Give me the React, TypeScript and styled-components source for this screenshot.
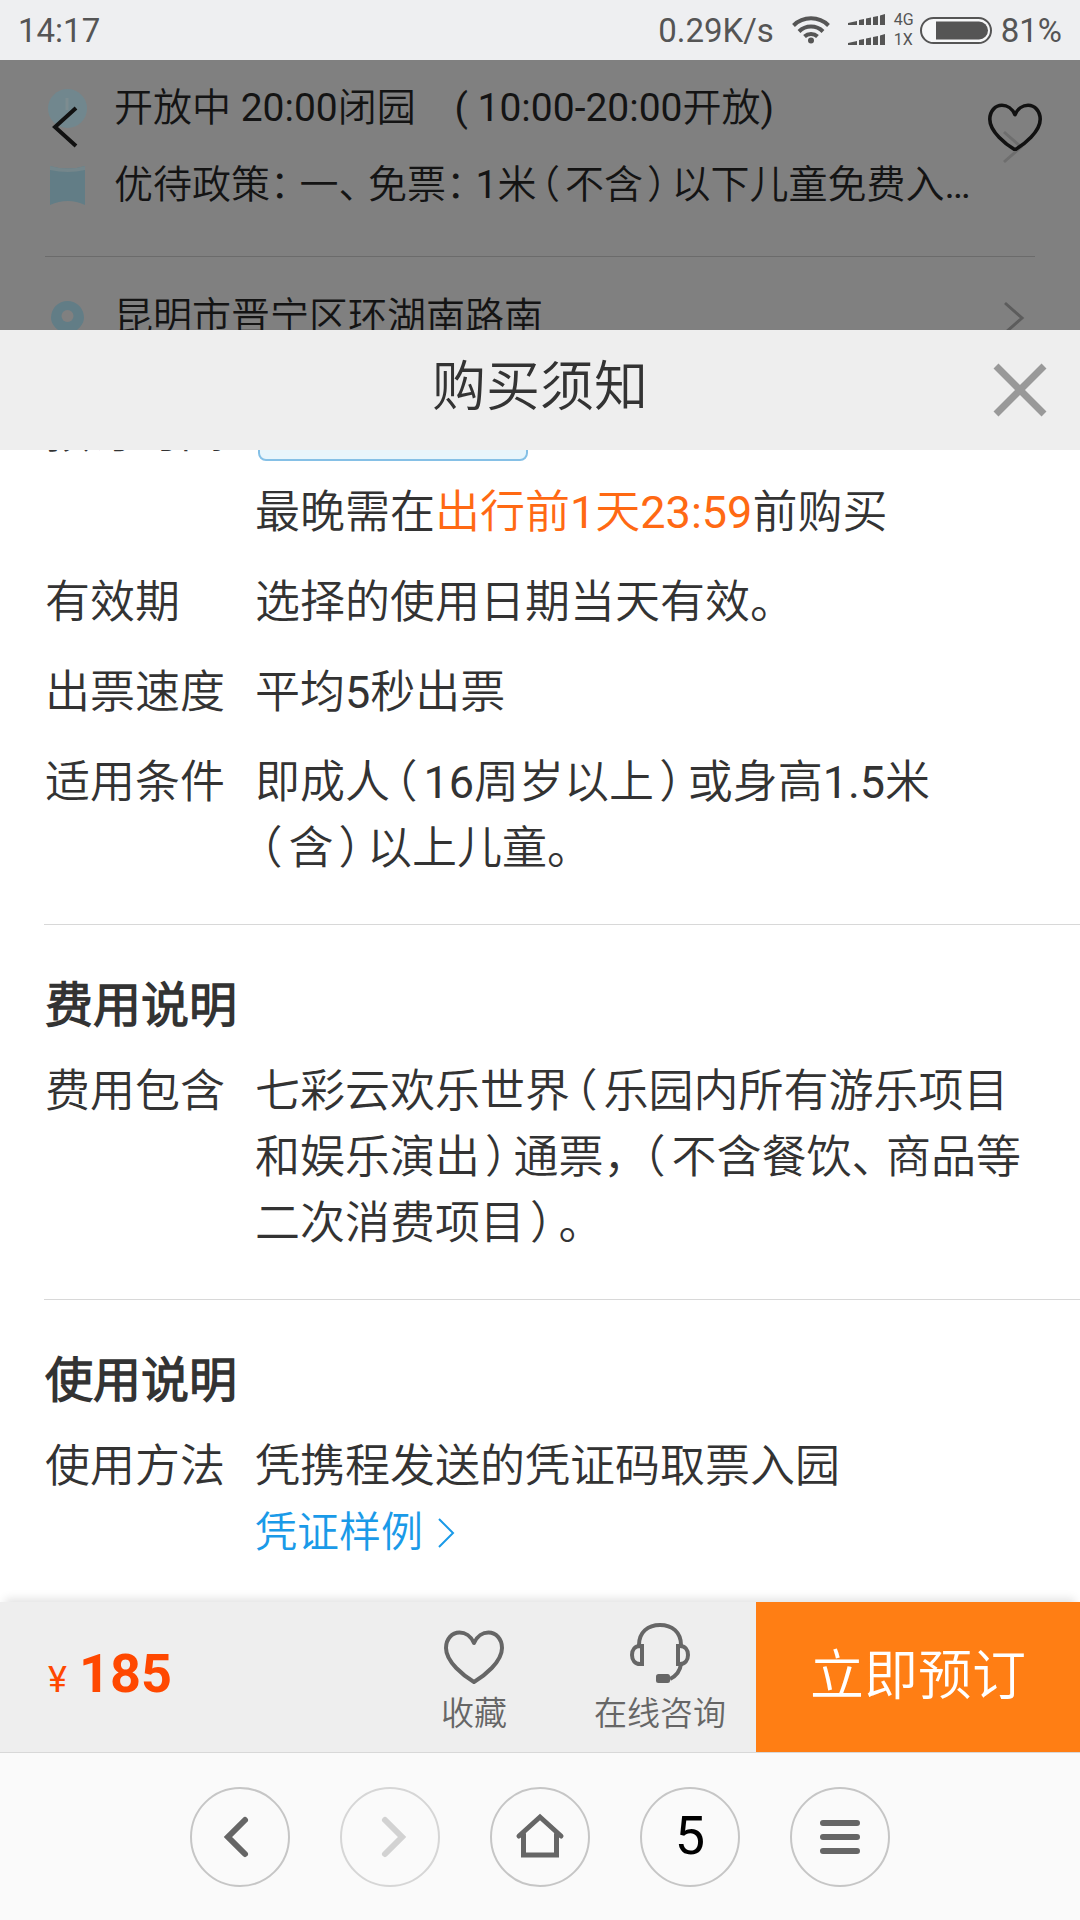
import React from 'react';
import styled, { createGlobalStyle } from 'styled-components';

const GlobalStyle = createGlobalStyle`
  *, *::before, *::after { box-sizing: border-box; }
  body {
    margin: 0;
    color: #333;
    background: #fff;
    font-family: Roboto, "Noto Sans CJK SC DemiLight", "Noto Sans CJK SC", sans-serif;
    font-weight: 400;
  }
  h1, h2, p, dl, dd, dt { margin: 0; font-weight: inherit; }
  button { border: 0; padding: 0; background: none; font: inherit; color: inherit; cursor: pointer; }
  svg { display: block; flex: none; }
`;

const Screen = styled.div`
  display: flex;
  flex-direction: column;
  height: 100vh;
  overflow: hidden;
`;

const StatusBar = styled.header`
  display: flex;
  align-items: center;
  justify-content: space-between;
  flex: none;
  height: 60px;
  padding: 0 18px;
  background: #eeeff1;
  color: #555;
  font-size: 33px;
`;

const StatusGroup = styled.div`
  display: flex;
  align-items: center;
`;

const Speed = styled.span`
  margin-right: 18px;
`;

const Signals = styled.div`
  display: flex;
  flex-direction: column;
  gap: 2px;
  margin: 0 6px 0 18px;
`;

const SignalRow = styled.div`
  display: flex;
  align-items: center;
  gap: 9px;
  font-size: 16px;
  line-height: 18px;
`;

const Level = styled.span`
  margin-left: 9px;
`;

const Backdrop = styled.section`
  position: relative;
  flex: none;
  height: 270px;
  overflow: hidden;
  padding: 10px 45px 0;
  background: #808080;
  color: #141414;
  font-size: 39px;
`;

const InfoRow = styled.div`
  display: flex;
  align-items: center;
  height: 77px;
  gap: 27px;
  padding: 0 10px 0 3px;
  white-space: pre;
`;

const InfoText = styled.p`
  flex: 1;
  padding-bottom: 10px;
`;

const Rule = styled.div`
  height: 1px;
  margin: 32px 0 22px;
  background: #6b6b6b;
`;

const FloatingButton = styled.button<{ $side: 'left' | 'right' }>`
  position: absolute;
  top: 39px;
  ${(p) => p.$side}: 35px;
  display: grid;
  place-items: center;
  width: 60px;
  height: 56px;
`;

const FaintChevron = styled.span`
  position: absolute;
  top: 70px;
  right: 56px;
`;

const SheetHeader = styled.div`
  display: grid;
  grid-template-columns: 1fr auto 1fr;
  align-items: center;
  flex: none;
  height: 120px;
  padding: 0 33px;
  background: #eee;
`;

const SheetTitle = styled.h1`
  grid-column: 2;
  padding-bottom: 4px;
  font-size: 54px;
  line-height: 72px;
`;

const CloseButton = styled.button`
  justify-self: end;
`;

const SheetBody = styled.main`
  display: flex;
  flex-direction: column;
  justify-content: flex-end;
  flex: 1;
  min-height: 0;
  overflow: hidden;
  padding: 0 0 36px 44px;
  font-size: 45px;
  line-height: 66px;
`;

const Section = styled.section`
  flex: none;
  padding-left: 1px;
  & + & {
    margin-top: 42px;
    padding-top: 48px;
    border-top: 1px solid #d8d8d8;
  }
`;

const SectionTitle = styled.h2`
  margin-bottom: 20px;
  font-size: 48px;
  font-weight: 700;
`;

const Terms = styled.dl`
  display: grid;
  row-gap: 24px;
`;

const Term = styled.div`
  display: grid;
  grid-template-columns: 210px 1fr;
  padding-right: 45px;
`;

const DateTag = styled.div`
  width: 270px;
  height: 61px;
  margin: 0 3px 19px;
  border: 2px solid #85c0e6;
  border-radius: 8px;
  background: #e8f5fb;
`;

const Accent = styled.span`
  color: #ff6913;
`;

const Punct = styled.span<{ $lead: number; $trail: number }>`
  padding: 0 ${(p) => p.$trail}px 0 ${(p) => p.$lead}px;
  font-feature-settings: "halt";
`;

const SampleLink = styled.a`
  display: flex;
  align-items: center;
  gap: 14px;
  color: #1a9ae8;
  font-size: 42px;
  text-decoration: none;
`;

const Footer = styled.footer`
  position: relative;
  display: flex;
  align-items: stretch;
  flex: none;
  height: 150px;
  background: #eee;
  box-shadow: 0 -8px 9px -5px rgba(0, 0, 0, 0.12);
`;

const Price = styled.p`
  flex: 1;
  align-self: center;
  padding: 0 0 8px 48px;
  color: #ff4800;
  font-size: 36px;
  strong { margin-left: 12px; font-size: 54px; font-weight: 700; }
`;

const Action = styled.button`
  display: flex;
  flex-direction: column;
  align-items: center;
  gap: 6px;
  width: 186px;
  padding-top: 20px;
  color: #666;
  font-size: 33px;
  line-height: 48px;
`;

const ActionIcon = styled.span`
  display: flex;
  align-items: flex-end;
  height: 62px;
`;

const BookButton = styled.button`
  width: 30%;
  margin-left: 3px;
  padding-bottom: 12px;
  background: #ff7e14;
  color: #fff;
  font-size: 54px;
`;

const BrowserBar = styled.nav`
  display: flex;
  align-items: center;
  justify-content: center;
  gap: 50px;
  flex: none;
  height: 168px;
  border-top: 1px solid #d8d8d8;
  background: #fafafa;
`;

const RoundButton = styled.button<{ $faded?: boolean }>`
  display: grid;
  place-items: center;
  width: 100px;
  height: 100px;
  border: 2px solid ${(p) => (p.$faded ? '#d6d6d6' : '#c6c6c6')};
  border-radius: 50%;
  color: ${(p) => (p.$faded ? '#d2d2d2' : '#666')};
`;

const TabCount = styled.span`
  padding-bottom: 2px;
  color: #000;
  font-size: 54px;
`;

const WifiIcon = () => (
  <svg width="38" height="28" viewBox="0 0 38 28" fill="none" stroke="#555" strokeWidth="4">
    <path d="M1.5 9.5 A25 25 0 0 1 36.500 9.500" />
    <path d="M7 15.500 A17 17 0 0 1 31 15.500" />
    <path d="M12.500 20.500 A9.500 9.500 0 0 1 25.500 20.500" />
    <circle cx="19" cy="24.500" r="3" fill="#555" stroke="none" />
  </svg>
);

const SignalIcon = () => (
  <svg width="37" height="12" viewBox="0 0 37 12" fill="#555">
    <path d="M0 11 V9 L9 7 V11 Z M11 6 L16 5 V11 H11 Z M18 4.500 L23 3.500 V11 H18 Z M25 3 L30 2 V11 H25 Z M32 1.500 L37 0 V11 H32 Z" />
  </svg>
);

const BatteryIcon = () => (
  <svg width="72" height="27" viewBox="0 0 72 27">
    <rect x="1" y="1" width="70" height="25" rx="12.500" fill="#f6f7f8" stroke="#555" strokeWidth="2" />
    <path d="M16 4.500 H59 A9 9 0 0 1 59 22.500 H16 Z" fill="#555" />
  </svg>
);

const ClockIcon = () => (
  <svg width="39" height="39" viewBox="0 0 39 39">
    <circle cx="19.500" cy="19.500" r="19.500" fill="#71878e" />
    <path d="M19 9 V21" stroke="#7d8c90" strokeWidth="3" />
  </svg>
);

const FlagIcon = () => (
  <svg width="39" height="39" viewBox="0 0 39 39">
    <path d="M2 0 Q20 5 37 0 V39 Q20 31 2 39 Z" fill="#627d86" />
    <path d="M2 0 Q20 5 37 0 V4 Q20 8 2 4 Z" fill="#74868b" />
  </svg>
);

const PinIcon = () => (
  <svg width="39" height="39" viewBox="0 0 39 39">
    <path d="M19.500 3 A16.500 16.500 0 0 1 36 19.500 C36 29 26 34 19.500 39 C13 34 3 29 3 19.500 A16.500 16.500 0 0 1 19.500 3 Z" fill="#627d86" />
    <circle cx="19.500" cy="18" r="6" fill="#808080" />
  </svg>
);

const ChevronRight = ({ color }: { color: string }) => (
  <svg width="22" height="34" viewBox="0 0 22 34" fill="none" stroke={color} strokeWidth="3">
    <path d="M2 2 L19 17 L2 32" />
  </svg>
);

const HeartIcon = ({ size, color }: { size: number; color: string }) => (
  <svg width={size} height={(size * 54) / 60} viewBox="0 0 60 54" fill="none" stroke={color} strokeWidth="4" strokeLinejoin="round">
    <path d="M30 13 C27 6 21 2.500 15.500 2.500 C8 2.500 2 9 2 18 C2 32 20 46 30 52 C40 46 58 32 58 18 C58 9 52 2.500 44.500 2.500 C39 2.500 33 6 30 13 Z" />
  </svg>
);

const HeadsetIcon = () => (
  <svg width="60" height="62" viewBox="0 0 60 62" fill="none" stroke="#666" strokeWidth="4">
    <path d="M9 23 C9 10 18 3 30 3 C42 3 51 10 51 23" />
    <path d="M12 24 V42 H10 C5 42 2 38 2 33 C2 28 5 24 10 24 Z" />
    <path d="M48 24 V42 H50 C55 42 58 38 58 33 C58 28 55 24 50 24 Z" />
    <path d="M51 42 C50 50 46 54 40 57" />
    <rect x="26" y="52" width="14" height="9" rx="2.500" fill="#666" stroke="none" />
  </svg>
);

const NavIcon = ({ d, weight = 6 }: { d: string; weight?: number }) => (
  <svg width="96" height="96" viewBox="2 2 96 96" fill="none" stroke="currentColor" strokeWidth={weight} strokeLinecap="round">
    <path d={d} />
  </svg>
);

const marks = /([（）：，、])/;

function Text({ children, small }: { children: string; small?: boolean }) {
  const side = small ? 5 : 6;
  return (
    <>
      {children.split(marks).map((part, i) => {
        if (!marks.test(part)) return part;
        const bracket = part === '（' || part === '）';
        return (
          <Punct key={i} $lead={bracket ? side - 1 : 0} $trail={bracket ? side : side * 2}>
            {part}
          </Punct>
        );
      })}
    </>
  );
}

export default function App() {
  return (
    <Screen>
      <GlobalStyle />
      <StatusBar>
        <span>14:17</span>
        <StatusGroup>
          <Speed>0.29K/s</Speed>
          <WifiIcon />
          <Signals>
            <SignalRow><SignalIcon />4G</SignalRow>
            <SignalRow><SignalIcon />1X</SignalRow>
          </Signals>
          <BatteryIcon />
          <Level>81%</Level>
        </StatusGroup>
      </StatusBar>

      <Backdrop>
        <InfoRow>
          <ClockIcon />
          <InfoText>{'开放中 20:00闭园    ( 10:00-20:00开放)'}</InfoText>
        </InfoRow>
        <InfoRow>
          <FlagIcon />
          <InfoText><Text small>优待政策：一、免票：1米（不含）以下儿童免费入…</Text></InfoText>
        </InfoRow>
        <Rule />
        <InfoRow>
          <PinIcon />
          <InfoText>昆明市晋宁区环湖南路南</InfoText>
          <ChevronRight color="#5c5c5c" />
        </InfoRow>
        <FaintChevron><ChevronRight color="#6e6e6e" /></FaintChevron>
        <FloatingButton $side="left" aria-label="返回">
          <svg width="26" height="42" viewBox="0 0 26 42" fill="none" stroke="#111" strokeWidth="4">
            <path d="M24 2 L3 21 L24 40" />
          </svg>
        </FloatingButton>
        <FloatingButton $side="right" aria-label="收藏景点">
          <HeartIcon size={54} color="#111" />
        </FloatingButton>
      </Backdrop>

      <SheetHeader>
        <SheetTitle>购买须知</SheetTitle>
        <CloseButton aria-label="关闭">
          <svg width="54" height="54" viewBox="0 0 54 54" stroke="#999" strokeWidth="7">
            <path d="M3 3 L51 51 M51 3 L3 51" />
          </svg>
        </CloseButton>
      </SheetHeader>

      <SheetBody>
        <Section>
          <Terms>
            <Term>
              <dt>预订时间</dt>
              <dd>
                <DateTag />
                最晚需在<Accent>出行前1天23:59</Accent>前购买
              </dd>
            </Term>
            <Term>
              <dt>有效期</dt>
              <dd>选择的使用日期当天有效。</dd>
            </Term>
            <Term>
              <dt>出票速度</dt>
              <dd>平均5秒出票</dd>
            </Term>
            <Term>
              <dt>适用条件</dt>
              <dd><Text>即成人（16周岁以上）或身高1.5米（含）以上儿童。</Text></dd>
            </Term>
          </Terms>
        </Section>
        <Section>
          <SectionTitle>费用说明</SectionTitle>
          <Terms>
            <Term>
              <dt>费用包含</dt>
              <dd><Text>七彩云欢乐世界（乐园内所有游乐项目和娱乐演出）通票，（不含餐饮、商品等二次消费项目）。</Text></dd>
            </Term>
          </Terms>
        </Section>
        <Section>
          <SectionTitle>使用说明</SectionTitle>
          <Terms>
            <Term>
              <dt>使用方法</dt>
              <dd>
                凭携程发送的凭证码取票入园
                <SampleLink href="#sample">
                  凭证样例
                  <svg width="18" height="32" viewBox="0 0 18 32" fill="none" stroke="#1a9ae8" strokeWidth="2">
                    <path d="M2 2 L16 16 L2 30" />
                  </svg>
                </SampleLink>
              </dd>
            </Term>
          </Terms>
        </Section>
      </SheetBody>

      <Footer>
        <Price>¥<strong>185</strong></Price>
        <Action>
          <ActionIcon><HeartIcon size={60} color="#666" /></ActionIcon>
          收藏
        </Action>
        <Action>
          <ActionIcon><HeadsetIcon /></ActionIcon>
          在线咨询
        </Action>
        <BookButton>立即预订</BookButton>
      </Footer>

      <BrowserBar>
        <RoundButton aria-label="后退"><NavIcon d="M55 33 L38 50 L55 67" /></RoundButton>
        <RoundButton $faded aria-label="前进"><NavIcon d="M45 33 L62 50 L45 67" /></RoundButton>
        <RoundButton aria-label="主页"><NavIcon weight={5} d="M29 49 L50 30 L71 49 M33.500 47 V68 H66.500 V47" /></RoundButton>
        <RoundButton aria-label="标签页"><TabCount>5</TabCount></RoundButton>
        <RoundButton aria-label="菜单"><NavIcon d="M33 36 H67 M33 50 H67 M33 64 H67" /></RoundButton>
      </BrowserBar>
    </Screen>
  );
}
